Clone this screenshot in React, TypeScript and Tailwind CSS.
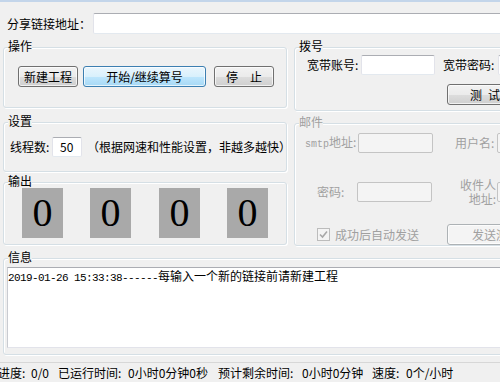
import React from "react";

const sans = "[font-family:'Noto_Sans_CJK_SC','Noto_Sans',sans-serif]";

function Group({
  label,
  disabled,
  className,
  children,
}: {
  label: string;
  disabled?: boolean;
  className?: string;
  children?: React.ReactNode;
}) {
  return (
    <div
      className={`relative shrink-0 rounded-[3px] border border-[#d5dfe5] shadow-[inset_1px_1px_0_#ffffff,1px_1px_0_#ffffff] ${className ?? ""}`}
    >
      <span
        className={`absolute -top-[9px] left-[4px] bg-[#f0f0f0] text-[12px] leading-[14px] whitespace-nowrap ${
          disabled ? "text-[#a0a0a0]" : "text-black"
        }`}
      >
        {label}
      </span>
      {children}
    </div>
  );
}

function TextBox({ className, disabled, children }: { className?: string; disabled?: boolean; children?: React.ReactNode }) {
  return (
    <div
      className={`shrink-0 rounded-[2px] border flex items-center ${
        disabled
          ? "border-[#c4c4c4] bg-[#f4f4f4]"
          : "border-[#e2e3ea] border-t-[#abadb3] border-b-[#e3e9ef] bg-white"
      } ${className ?? ""}`}
    >
      {children}
    </div>
  );
}

function Btn({ className, children, blue, disabled }: { className?: string; children: React.ReactNode; blue?: boolean; disabled?: boolean }) {
  let look =
    "border-[#707070] bg-[linear-gradient(#f2f2f2,#ebebeb_50%,#dddddd_50%,#cfcfcf)] text-black";
  if (blue)
    look =
      "border-[#3c7fb1] bg-[linear-gradient(#eaf6fd,#d9f0fc_50%,#bee6fd_50%,#a7d9f5)] text-black";
  if (disabled) look = "border-[#adb2b5] bg-[#f4f4f4] text-[#a0a0a0]";
  return (
    <div
      className={`shrink-0 flex items-center rounded-[3px] border shadow-[inset_0_0_0_1px_rgba(255,255,255,0.7)] text-[12px] leading-none whitespace-nowrap ${look} ${className ?? ""}`}
    >
      {children}
    </div>
  );
}

function Digit() {
  return (
    <div className="shrink-0 w-[41px] h-[50px] bg-[#a9a9a9] flex items-center justify-center [font-family:'Liberation_Serif',serif] text-[40px] leading-none text-black">
      0
    </div>
  );
}

export default function App() {
  return (
    <div className={`w-[500px] h-[382px] overflow-hidden bg-[#f0f0f0] flex flex-col text-[12px] leading-[14px] text-black ${sans}`}>
      <div className="h-[2px] shrink-0 bg-[#c3d5ea]" />

      {/* share link row */}
      <div className="flex items-center h-[21px] mt-[11px] shrink-0">
        <span className="ml-[7px] w-[86px] shrink-0 whitespace-nowrap">分享链接地址：</span>
        <TextBox className="w-[420px] h-[21px]" />
      </div>

      {/* two columns */}
      <div className="flex mt-[13px] shrink-0">
        {/* left column */}
        <div className="ml-[3px] w-[284px] flex flex-col shrink-0">
          <Group label="操作" className="h-[61px]">
            <div className="flex pt-[18px] pl-[14px]">
              <Btn className="w-[60px] h-[21px] justify-center">新建工程</Btn>
              <Btn blue className="ml-[5px] w-[123px] h-[21px] justify-center">开始/继续算号</Btn>
              <Btn className="ml-[8px] w-[60px] h-[21px] justify-center">停　止</Btn>
            </div>
          </Group>

          <Group label="设置" className="mt-[14px] h-[50px]">
            <div className="flex items-center pt-[14px] pl-[6px]">
              <span className="w-[42px] shrink-0 whitespace-nowrap">线程数:</span>
              <TextBox className="w-[30px] h-[20px]">
                <span className="pl-[7px]">50</span>
              </TextBox>
              <span className="ml-[5px] whitespace-nowrap">（根据网速和性能设置，非越多越快）</span>
            </div>
          </Group>

          <Group label="输出" className="mt-[10px] h-[63px]">
            <div className="flex pt-[5px] pl-[18px]">
              <Digit />
              <div className="ml-[27px]">
                <Digit />
              </div>
              <div className="ml-[28px]">
                <Digit />
              </div>
              <div className="ml-[27px]">
                <Digit />
              </div>
            </div>
          </Group>
        </div>

        {/* right column */}
        <div className="ml-[7px] w-[230px] flex flex-col shrink-0">
          <Group label="拨号" className="h-[64px]">
            <div className="flex items-center pt-[7px] pl-[12px]">
              <span className="w-[54px] shrink-0 whitespace-nowrap">宽带账号:</span>
              <TextBox className="w-[74px] h-[20px]" />
              <span className="ml-[8px] w-[55px] shrink-0 whitespace-nowrap">宽带密码:</span>
              <TextBox className="w-[74px] h-[20px]" />
            </div>
            <div className="flex mt-[9px] pl-[152px]">
              <Btn className="w-[92px] h-[21px] pl-[22px]">
                <span>测</span>
                <span className="ml-[6px]">试</span>
              </Btn>
            </div>
          </Group>

          <Group label="邮件" disabled className="mt-[12px] h-[123px]">
            <div className="text-[#a0a0a0]">
              <div className="flex items-center pt-[9px] pl-[10px]">
                <span className="w-[53px] shrink-0 whitespace-nowrap">
                  <span className="[font-family:'Liberation_Mono',monospace] text-[10px]">smtp</span>地址:
                </span>
                <TextBox disabled className="w-[75px] h-[20px]" />
                <span className="ml-[22px] w-[42px] shrink-0 whitespace-nowrap">用户名:</span>
                <TextBox disabled className="w-[74px] h-[20px]" />
              </div>
              <div className="flex items-center mt-[25px] pl-[22px]">
                <span className="w-[40px] shrink-0 whitespace-nowrap">密码:</span>
                <TextBox disabled className="w-[75px] h-[20px]" />
                <div className="ml-[26px] w-[38px] shrink-0 flex flex-col items-end leading-[14px] whitespace-nowrap">
                  <span>收件人</span>
                  <span>地址:</span>
                </div>
                <TextBox disabled className="ml-[1px] w-[74px] h-[20px]" />
              </div>
              <div className="flex items-center mt-[18px] pl-[22px]">
                <div className="w-[13px] h-[13px] shrink-0 border border-[#bcbcbc] bg-[#f4f4f4] flex items-center justify-center">
                  <svg width="9" height="9" viewBox="0 0 9 9">
                    <path d="M1 4.5 L3.5 7 L8 1.5" fill="none" stroke="#a8a8a8" strokeWidth="1.6" />
                  </svg>
                </div>
                <span className="ml-[5px] w-[84px] shrink-0 whitespace-nowrap">成功后自动发送</span>
                <Btn disabled className="ml-[28px] w-[98px] h-[21px] pl-[24px]">发送测试</Btn>
              </div>
            </div>
          </Group>
        </div>
      </div>

      {/* info */}
      <Group label="信息" className="ml-[3px] mt-[12px] w-[510px] h-[97px]">
        <div className="pt-[8px] pl-[3px]">
          <div className="h-[81px] bg-white border border-[#e2e3ea] border-t-[#abadb3] border-l-[#c9cbd1] pt-[1px] whitespace-nowrap leading-[14px]">
            <span className="[font-family:'Liberation_Mono',monospace] text-[11px] tracking-[-0.6px]">2019-01-26 15:33:38------</span>
            <span>每输入一个新的链接前请新建工程</span>
          </div>
        </div>
      </Group>

      {/* status bar */}
      <div className="mt-[7px] h-[20px] shrink-0 border-t border-[#d7d7d7] flex items-center whitespace-nowrap text-[12px]">
        <span className="ml-[-2px] w-[33px] shrink-0">进度:</span>
        <span className="w-[27px] shrink-0">0/0</span>
        <span className="w-[70px] shrink-0">已运行时间:</span>
        <span className="w-[90px] shrink-0">0小时0分钟0秒</span>
        <span className="w-[84px] shrink-0">预计剩余时间:</span>
        <span className="w-[70px] shrink-0">0小时0分钟</span>
        <span className="w-[34px] shrink-0">速度:</span>
        <span className="shrink-0">0个/小时</span>
      </div>
    </div>
  );
}
